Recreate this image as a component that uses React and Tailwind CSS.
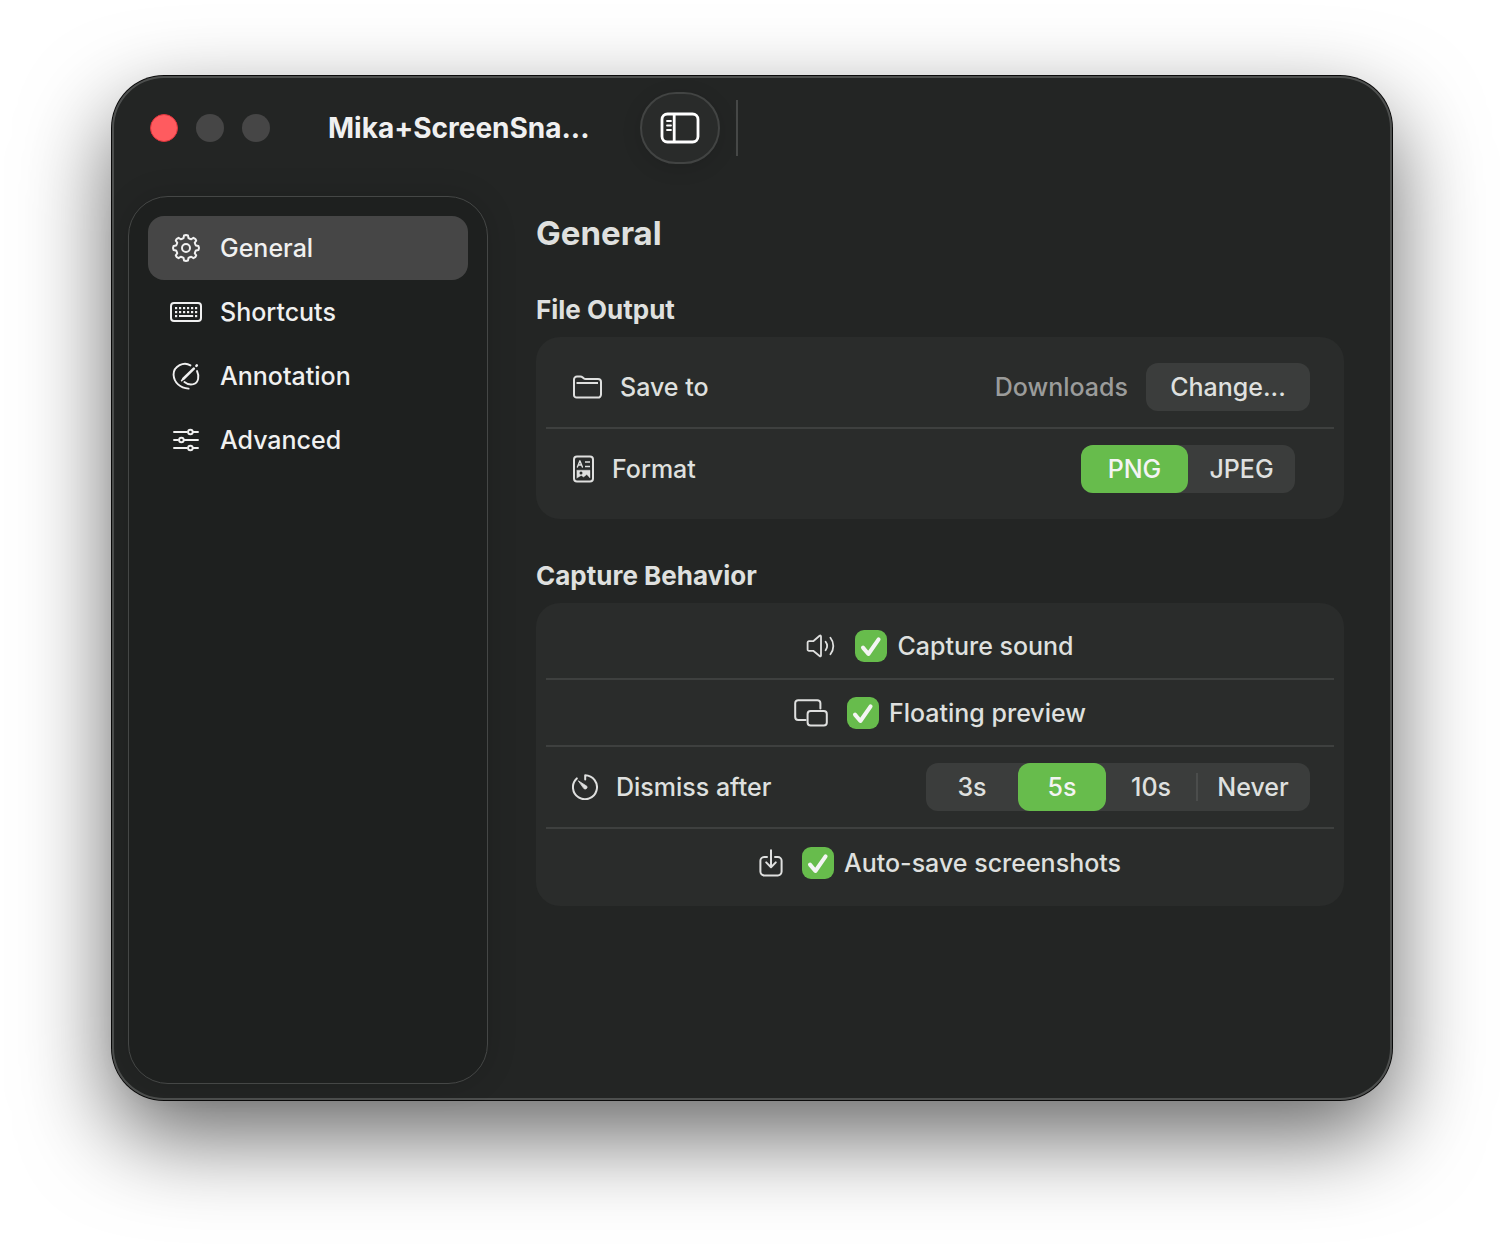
import { useState } from 'react'

function Icon({ width, height, stroke = 2, children }) {
  return (
    <svg
      width={width}
      height={height}
      viewBox={`0 0 ${width} ${height}`}
      className="shrink-0"
      fill="none"
      stroke="currentColor"
      strokeWidth={stroke}
      strokeLinecap="round"
      strokeLinejoin="round"
      aria-hidden="true"
    >
      {children}
    </svg>
  )
}

// eight teeth, each one a trapezoid from the root circle to the outer circle
const gearPoint = (deg, r) => {
  const a = (deg * Math.PI) / 180
  return `${(14 + r * Math.cos(a)).toFixed(2)},${(14 + r * Math.sin(a)).toFixed(2)}`
}
const gearOutline = Array.from({ length: 8 }, (_, i) => i * 45)
  .flatMap(deg => [
    gearPoint(deg - 14, 10.2),
    gearPoint(deg - 9, 12.6),
    gearPoint(deg, 13),
    gearPoint(deg + 9, 12.6),
    gearPoint(deg + 14, 10.2),
    gearPoint(deg + 22.5, 10),
  ])
  .join(' ')

const GearIcon = () => (
  <Icon width={28} height={28}>
    <polygon points={gearOutline} />
    <circle cx="14" cy="14" r="4" />
  </Icon>
)

const KeyboardIcon = () => (
  <Icon width={32} height={20}>
    <rect x="1" y="1" width="30" height="18" rx="3" />
    <g fill="currentColor" stroke="none">
      {[5, 9, 13, 17, 21, 25].map(x => <rect key={x} x={x} y="5" width="2.2" height="2.2" />)}
      {[5, 9, 13, 17, 21, 25].map(x => <rect key={x} x={x} y="9" width="2.2" height="2.2" />)}
      <rect x="5" y="13" width="2.2" height="2.2" />
      <rect x="9" y="13" width="14.2" height="2" />
      <rect x="25" y="13" width="2.2" height="2.2" />
    </g>
  </Icon>
)

const AnnotationIcon = () => (
  <Icon width={28} height={28} stroke={1.9}>
    <path d="M18.4 3.4 C15.6 1.6 11 1.4 7.6 3.2 C3.6 5.4 1.4 9 1.6 13 C2 20.4 8 26 16.6 26.6" />
    <path d="M25 9 C27.4 14 26.8 20.6 21.4 22.2 C18 23 14.6 21.8 12.4 20" />
    <path d="M11.4 16.8 L21.8 6.6" strokeWidth="2.6" />
    <path d="M9.6 18.6 L11.4 16.8" strokeWidth="1.6" />
    <path d="M24.4 3.8 L24.8 3.4" strokeWidth="2.6" />
  </Icon>
)

const SlidersIcon = () => (
  <Icon width={28} height={24} stroke={1.9}>
    <path d="M2 4 H15 M21 4 H26 M2 12 H6 M12 12 H26 M2 20 H15 M21 20 H26" />
    <circle cx="18.4" cy="4" r="2.3" />
    <circle cx="9.4" cy="12" r="2.3" />
    <circle cx="18.4" cy="20" r="2.3" />
  </Icon>
)

const SidebarIcon = () => (
  <Icon width={40} height={32} stroke={2.8}>
    <rect x="2" y="2" width="36" height="28" rx="5.5" />
    <path d="M14.2 2 V30" strokeLinecap="butt" />
    <path d="M7 9 H11 M7 13.5 H11 M7 18 H11" strokeWidth="1.8" />
  </Icon>
)

const FolderIcon = () => (
  <Icon width={30} height={24}>
    <path d="M2 20 V4.5 A3 3 0 0 1 5 1.5 H8.2 C9.4 1.5 10 1.8 10.8 2.5 L11.6 3.2 C12.3 3.8 12.9 4 13.8 4 H26 A3 3 0 0 1 29 7 V19.6 A3 3 0 0 1 26 22.6 H4.6 A2.6 2.6 0 0 1 2 20 Z" />
    <path d="M4.5 8 H26" strokeLinecap="butt" />
  </Icon>
)

const FormatIcon = () => (
  <Icon width={22} height={28}>
    <rect x="2" y="1.5" width="19" height="25" rx="3" />
    <path d="M5.4 12 L7.9 5.8 L10.4 12 M6.3 10 H9.5" strokeWidth="1.4" />
    <path d="M13 7 H18 M13 11.4 H18" strokeWidth="1.5" strokeLinecap="butt" />
    <path
      d="M5 15.2 H18 V23 L14.8 19.6 L11.6 22 L9.2 20.4 L5 23 Z"
      fill="currentColor"
      strokeWidth="0.4"
    />
    <circle cx="9" cy="18" r="1.5" className="fill-[#2a2c2b]" stroke="none" />
  </Icon>
)

const SpeakerIcon = () => (
  <Icon width={30} height={24} stroke={1.8}>
    <path d="M1.6 8.6 A1.4 1.4 0 0 1 3 7.2 H7.2 L13.6 1.8 C14.4 1.2 15 1.4 15 2.4 V21.4 C15 22.4 14.4 22.6 13.6 22 L7.2 16.8 H3 A1.4 1.4 0 0 1 1.6 15.4 Z" />
    <path d="M19.6 7.8 A7 7 0 0 1 19.6 16.2" />
    <path d="M24.4 3.8 A13 13 0 0 1 24.4 20.2" />
  </Icon>
)

const PreviewIcon = () => (
  <Icon width={34} height={28}>
    <path d="M11.6 21 H4.2 A3 3 0 0 1 1.2 18 V4.2 A3 3 0 0 1 4.2 1.2 H23.4 A3 3 0 0 1 26.4 4.2 V9.4" />
    <rect x="13.6" y="12" width="19.2" height="14.6" rx="3" />
  </Icon>
)

const TimerIcon = () => (
  <Icon width={26} height={26}>
    <path d="M13.2 5.6 V1.2 A12 12 0 1 1 4.8 4.4" />
    <path
      d="M6.6 7 L14.8 12.2 A1.9 1.9 0 0 1 12.2 14.8 Z"
      fill="currentColor"
      strokeWidth="0.8"
    />
  </Icon>
)

const SaveIcon = () => (
  <Icon width={24} height={28}>
    <path d="M8 8 H5.2 A3.8 3.8 0 0 0 1.4 11.8 V22.6 A3.8 3.8 0 0 0 5.2 26.4 H18.8 A3.8 3.8 0 0 0 22.6 22.6 V11.8 A3.8 3.8 0 0 0 18.8 8 H16" />
    <path d="M12 1.2 V17.6 M7.2 13.4 L12 18.2 L16.8 13.4" />
  </Icon>
)

const navItems = [
  { label: 'General', icon: GearIcon },
  { label: 'Shortcuts', icon: KeyboardIcon },
  { label: 'Annotation', icon: AnnotationIcon },
  { label: 'Advanced', icon: SlidersIcon },
]

const formats = [
  { value: 'PNG', width: 'w-[107px]' },
  { value: 'JPEG', width: 'w-[107px]' },
]

const delays = [
  { value: '3s', width: 'w-[92px]' },
  { value: '5s', width: 'w-[88px]' },
  { value: '10s', width: 'w-[90px]' },
  { value: 'Never', width: 'w-[114px]', divided: true },
]

function Segmented({ name, label, options, value, onChange }) {
  return (
    <div role="radiogroup" aria-label={label} className="flex rounded-xl bg-[#3b3d3c]">
      {options.map(o => (
        <label
          key={o.value}
          className={`relative flex h-12 items-center justify-center rounded-xl has-checked:bg-[#67bc4c] has-checked:text-[#f4f4f4] ${o.width}`}
        >
          {o.divided && <span className="absolute left-0 h-7 w-0.5 bg-[#4b4d4c]" />}
          <input
            type="radio"
            name={name}
            value={o.value}
            checked={value === o.value}
            onChange={() => onChange(o.value)}
            className="sr-only"
          />
          {o.value}
        </label>
      ))}
    </div>
  )
}

function CheckRow({ icon: RowIcon, label }) {
  const [on, setOn] = useState(true)
  return (
    <div className="flex h-[67px] items-center justify-center gap-[19px]">
      <RowIcon />
      <label className="flex items-center gap-[10px]">
        <span className="grid size-8">
          <input
            type="checkbox"
            checked={on}
            onChange={(e) => setOn(e.target.checked)}
            className="peer col-start-1 row-start-1 size-8 appearance-none rounded-[9px] bg-[#3b3d3c] checked:bg-[#67bc4c]"
          />
          <svg
            viewBox="0 0 32 32"
            className="pointer-events-none invisible col-start-1 row-start-1 size-8 peer-checked:visible"
            fill="none"
            stroke="#f4f4f4"
            strokeWidth="4"
            strokeLinecap="round"
            strokeLinejoin="round"
            aria-hidden="true"
          >
            <path d="M8 17.6 L13.4 24 L23.6 9.4" />
          </svg>
        </span>
        {label}
      </label>
    </div>
  )
}

function Section({ title, children }) {
  return (
    <section>
      <h2 className="text-[26px] font-bold leading-8">{title}</h2>
      <div className="mt-[11px] divide-y-2 divide-[#3e403f] rounded-3xl bg-[#2a2c2b] p-[10px]">
        {children}
      </div>
    </section>
  )
}

export default function App() {
  const [tab, setTab] = useState('General')
  const [format, setFormat] = useState('PNG')
  const [delay, setDelay] = useState('5s')

  return (
    <div className="flex min-h-screen bg-white px-28 pt-[76px] pb-[148px] font-['Inter',sans-serif] text-[25px] font-medium leading-8 text-[#dfe0df]">
      <div className="flex flex-1 flex-col rounded-[52px] bg-[#232524] shadow-[inset_0_0_0_2px_#4d4f4e,0_0_0_1px_#0a0a0a,0_36px_90px_rgba(0,0,0,0.6)]">
        <header className="flex h-[104px] items-center pl-[38px]">
          <div className="flex gap-[18px]">
            <button aria-label="Close" className="size-7 rounded-full border border-[#e0333b] bg-[#ff5b5f]" />
            <button aria-label="Minimize" className="size-7 rounded-full bg-[#464646]" />
            <button aria-label="Zoom" className="size-7 rounded-full bg-[#464646]" />
          </div>
          <h1 className="ml-[58px] w-[312px] text-[28px] font-bold text-[#f0f0f0]">Mika+ScreenSna...</h1>
          <button
            aria-label="Toggle sidebar"
            className="flex h-[72px] w-20 items-center justify-center rounded-full border-2 border-[#424443] bg-[#292b2a] text-white shadow-[0_4px_20px_rgba(0,0,0,0.12)]"
          >
            <SidebarIcon />
          </button>
          <div className="ml-4 h-14 w-0.5 bg-[#464847]" />
        </header>

        <div className="flex flex-1">
          <nav className="m-4 mr-0 w-[360px] shrink-0 rounded-[40px] border border-[#454746] bg-[#1e201f] p-[19px] shadow-[0_0_30px_rgba(0,0,0,0.15)]">
            {navItems.map(({ label, icon: NavIcon }) => (
              <button
                key={label}
                onClick={() => setTab(label)}
                className={`flex h-16 w-full items-center gap-4 rounded-2xl pl-5 text-left text-[#f0f0f0] ${tab === label ? 'bg-[#464646]' : ''}`}
              >
                <span className="flex w-9 justify-center"><NavIcon /></span>
                {label}
              </button>
            ))}
          </nav>

          <main className="flex flex-1 flex-col gap-[41px] px-12 pt-[33px]">
            <h2 className="text-[33px] font-bold leading-10">General</h2>

            <Section title="File Output">
              <div className="flex items-center gap-[18px] py-4 pr-6 pl-[26px]">
                <FolderIcon />
                Save to
                <span className="ml-auto text-[#9b9c9b]">Downloads</span>
                <button className="h-12 w-[164px] rounded-xl bg-[#3b3d3c]">Change...</button>
              </div>
              <div className="flex items-center gap-[18px] py-4 pr-[39px] pl-[26px]">
                <FormatIcon />
                <span className="flex-1">Format</span>
                <Segmented name="format" label="Format" options={formats} value={format} onChange={setFormat} />
              </div>
            </Section>

            <Section title="Capture Behavior">
              <CheckRow icon={SpeakerIcon} label="Capture sound" />
              <CheckRow icon={PreviewIcon} label="Floating preview" />
              <div className="flex items-center gap-[18px] py-4 pr-6 pl-[26px]">
                <TimerIcon />
                <span className="flex-1">Dismiss after</span>
                <Segmented name="delay" label="Dismiss after" options={delays} value={delay} onChange={setDelay} />
              </div>
              <CheckRow icon={SaveIcon} label="Auto-save screenshots" />
            </Section>
          </main>
        </div>
      </div>
    </div>
  )
}
